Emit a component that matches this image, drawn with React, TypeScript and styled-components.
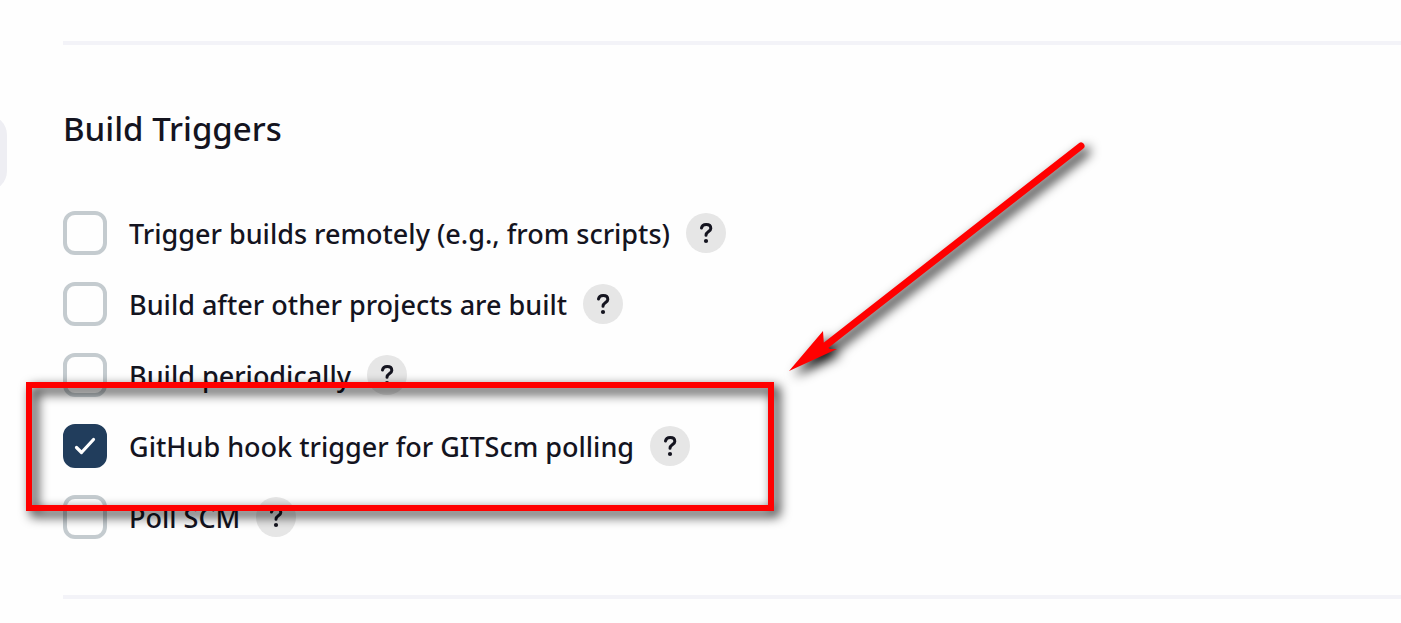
import React, { useState } from "react";
import styled, { createGlobalStyle } from "styled-components";

const GlobalStyle = createGlobalStyle`
  *, *::before, *::after { box-sizing: border-box; }
  body {
    margin: 0;
    background: #fefefe;
    color: #14141f;
    font-family: "Noto Sans", "Open Sans", sans-serif;
  }
`;

const Page = styled.div`
  position: relative;
  display: flex;
  align-items: flex-start;
  overflow: hidden;
`;

const SidebarEdge = styled.div`
  flex: none;
  width: 47px;
  height: 76px;
  margin-top: 115px;
  margin-left: -40px;
  border-radius: 20px;
  background: #eeeef3;
`;

const Section = styled.section`
  flex: 1;
  min-width: 0;
  margin-left: 56px;
  padding: 41px 0 24px;
`;

const Divider = styled.hr`
  height: 4px;
  margin: 0;
  border: 0;
  background: #f3f3f8;
`;

const Title = styled.h2`
  margin: 60px 0 58px;
  font-size: 33px;
  line-height: 48px;
  font-weight: 500;
`;

const TriggerList = styled.ul`
  display: flex;
  flex-direction: column;
  gap: 27px;
  margin: 0 0 56px;
  padding: 0;
  list-style: none;
`;

const TriggerRow = styled.li`
  position: relative;
  display: flex;
  align-items: center;
  gap: 16px;
  height: 44px;
`;

const TriggerLabel = styled.label`
  display: flex;
  align-items: center;
  gap: 22px;
  font-size: 27px;
  line-height: 44px;
  font-weight: 500;
  white-space: nowrap;
`;

const LabelText = styled.span`
  padding-top: 2px;
`;

const CheckboxBox = styled.span`
  display: grid;
  flex: none;
  width: 44px;
  height: 44px;

  > * {
    grid-area: 1 / 1;
  }
`;

const CheckboxInput = styled.input`
  appearance: none;
  width: 44px;
  height: 44px;
  margin: 0;
  border: 4px solid #c4cbcf;
  border-radius: 12px;
  background: #fefefe;

  &:checked {
    border-color: #213d5c;
    background: #213d5c;
  }
`;

const CheckMark = styled.svg`
  width: 44px;
  height: 44px;
  pointer-events: none;
`;

const HelpButton = styled.button`
  display: flex;
  align-items: center;
  justify-content: center;
  width: 40px;
  height: 40px;
  padding: 0;
  border: 0;
  border-radius: 50%;
  background: #e6e6e6;
  color: #14141f;
`;

const Highlight = styled.div`
  position: absolute;
  top: -42px;
  left: -37px;
  z-index: 1;
  width: 748px;
  height: 129px;
  border: 6px solid #ff0000;
  filter: drop-shadow(5px 5px 6px rgba(0, 0, 0, 1));
  pointer-events: none;
`;

const Arrow = styled.svg`
  position: absolute;
  top: 120px;
  left: 770px;
  width: 350px;
  height: 280px;
  overflow: visible;
  filter: drop-shadow(5px 5px 6px rgba(0, 0, 0, 1));
  pointer-events: none;
`;

type Trigger = { id: string; label: string; checked: boolean; highlighted?: boolean };

const triggers: Trigger[] = [
  { id: "remote", label: "Trigger builds remotely (e.g., from scripts)", checked: false },
  { id: "after", label: "Build after other projects are built", checked: false },
  { id: "periodic", label: "Build periodically", checked: false },
  { id: "github", label: "GitHub hook trigger for GITScm polling", checked: true, highlighted: true },
  { id: "poll", label: "Poll SCM", checked: false },
];

function TriggerOption({ id, label, checked: initial, highlighted }: Trigger) {
  const [checked, setChecked] = useState(initial);
  return (
    <TriggerRow>
      <TriggerLabel htmlFor={id}>
        <CheckboxBox>
          <CheckboxInput
            id={id}
            type="checkbox"
            checked={checked}
            onChange={(e) => setChecked(e.target.checked)}
          />
          {checked && (
            <CheckMark viewBox="0 0 44 44" aria-hidden="true">
              <path
                d="M13.5 23.5 L18.5 28.5 L30.5 15.5"
                fill="none"
                stroke="#fff"
                strokeWidth="3.2"
                strokeLinecap="round"
                strokeLinejoin="round"
              />
            </CheckMark>
          )}
        </CheckboxBox>
        <LabelText>{label}</LabelText>
      </TriggerLabel>
      <HelpButton type="button" aria-label={`Help for ${label}`}>
        <svg width="40" height="40" viewBox="0 0 40 40" aria-hidden="true">
          <path
            d="M15.5 15 C15.9 12.6 17.8 11.5 20.2 11.5 C23 11.5 24.8 13.1 24.8 15.4 C24.8 18.5 20 18.5 20 22.2"
            fill="none"
            stroke="currentColor"
            strokeWidth="3"
            strokeLinecap="round"
          />
          <circle cx="20" cy="28" r="2.1" fill="currentColor" />
        </svg>
      </HelpButton>
      {highlighted && <Highlight />}
    </TriggerRow>
  );
}

export default function App() {
  return (
    <>
      <GlobalStyle />
      <Page>
        <SidebarEdge />
        <Section>
          <Divider />
          <Title>Build Triggers</Title>
          <TriggerList>
            {triggers.map((trigger) => (
              <TriggerOption key={trigger.id} {...trigger} />
            ))}
          </TriggerList>
          <Divider />
        </Section>
        <Arrow viewBox="0 0 350 280" aria-hidden="true">
          <path d="M50 230 L311 26" stroke="#ff0000" strokeWidth="7" strokeLinecap="round" />
          <path d="M19 251 L53 211 L54 225 L60 229 L67 229 Z" fill="#ff0000" />
        </Arrow>
      </Page>
    </>
  );
}
